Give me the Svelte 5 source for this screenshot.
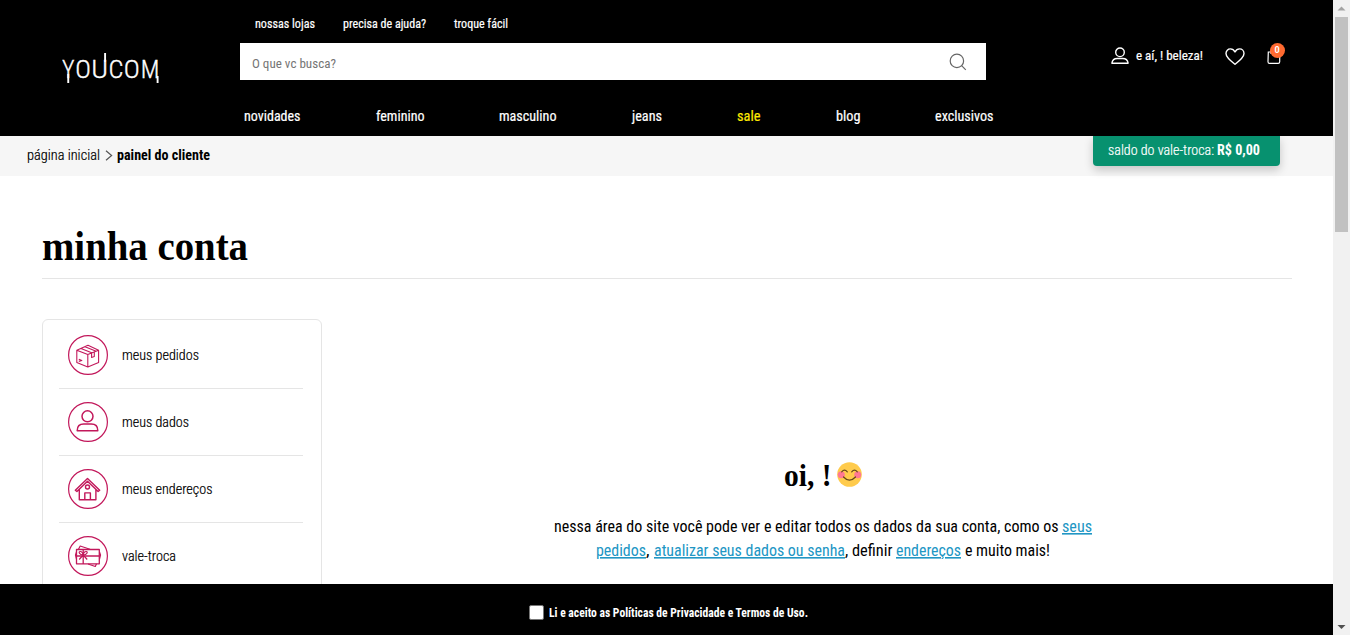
<script>
  const topLinks = [['nossas lojas', 60], ['precisa de ajuda?', 83], ['troque fácil', 54]];
  const nav = [['novidades', 56.5], ['feminino', 48.5], ['masculino', 57.5], ['jeans', 30], ['sale', 23.5], ['blog', 24.5], ['exclusivos', 58.5]];
  const menu = [['meus pedidos', 77, 'box'], ['meus dados', 67, 'user'], ['meus endereços', 90.5, 'house'], ['vale-troca', 54, 'gift']];
  const logo = [['Y', 0, 12.5], ['O', 13.2, 15.6], ['U', 29.2, 16.8], ['C', 46.5, 15], ['O', 61.8, 16], ['M', 78.8, 18.6]];
</script>

{#snippet label(text, w, size, cls = '')}
  <svg class="label {cls}" width={w} height="20"><text x="0" y="15" textLength={w} lengthAdjust="spacingAndGlyphs" font-size={size}>{text}</text></svg>
{/snippet}

<div class="window">
  <div class="page">
    <header>
      <div class="logo">
        <svg width="100" height="36" viewBox="0 0 100 36">
          {#each logo as [c, x, w]}
            <text {x} y="28" textLength={w} lengthAdjust="spacingAndGlyphs">{c}</text>
          {/each}
          <path d="M6.250 24v9M43.100 3v9M95.600 26v7" stroke="#fff" stroke-width="1.900" />
        </svg>
      </div>
      <div class="center">
        <div class="toplinks">
          {#each topLinks as [t, w]}{@render label(t, w, 13, 'medium')}{/each}
        </div>
        <div class="search">
          {@render label('O que vc busca?', 84, 13, 'hint')}
          <svg width="18" height="18" viewBox="0 0 18 18" fill="none" stroke="#666" stroke-width="1.2"><circle cx="7.9" cy="7.9" r="6.7" /><path d="M12.6 12.6l4.2 4.2" /></svg>
        </div>
        <nav>
          {#each nav as [t, w]}{@render label(t, w, 15, t === 'sale' ? 'medium sale' : 'medium')}{/each}
        </nav>
      </div>
      <div class="account">
        <svg width="18" height="18" viewBox="0 0 18 18" fill="none" stroke="#fff" stroke-width="1.4"><circle cx="9" cy="5.3" r="4.3" /><path d="M.9 16.2C1.4 12.8 3.4 11.5 6.2 11.5h5.6c2.8 0 4.8 1.3 5.3 4.7z" stroke-linejoin="round" /></svg>
        {@render label('e aí, ! beleza!', 67, 13, 'medium')}
        <svg class="heart" width="20" height="18" viewBox="0 0 20 18" fill="none" stroke="#fff" stroke-width="1.4"><path d="M10 16.3C5 12.3 1 9.2 1 5.4 1 2.8 3 .9 5.4.9 7.4.9 9 2 10 3.9 11 2 12.6.9 14.6.9 17 .9 19 2.8 19 5.4c0 3.800-4 6.900-9 10.900z" stroke-linejoin="round" /></svg>
        <div class="bag">
          <svg width="14" height="18" viewBox="0 0 14 18" fill="none" stroke="#fff" stroke-width="1.2"><path d="M1.300 5h11.400v9.800q0 1.600-1.600 1.600H2.600Q1 16.400 1 14.800zM4 7V4a3 3 0 0 1 6 0v3" /></svg>
          <b>0</b>
        </div>
      </div>
    </header>

    <div class="crumbs">
      {@render label('página inicial', 73, 14.5, 'light')}
      <svg class="chev" width="8" height="11" viewBox="0 0 8 11" fill="none" stroke="#555" stroke-width="1.2"><path d="M1 .8l5.600 4.700L1 10.200" /></svg>
      {@render label('painel do cliente', 93, 14.5, 'bold')}
      <div class="balance">
        {@render label('saldo do vale-troca:', 106, 14.5, 'light')}
        {@render label('R$ 0,00', 43, 14.5, 'bold')}
      </div>
    </div>

    <main>
      <h1><svg width="206" height="50"><text x="0" y="36" textLength="206" lengthAdjust="spacingAndGlyphs" font-size="42">minha conta</text></svg></h1>
      <div class="columns">
        <aside>
          {#each menu as [t, w, icon]}
            <div class="item">
              <svg width="40" height="40" viewBox="0 0 40 40" fill="none" stroke="#c2185b" stroke-width="1.200" stroke-linejoin="round">
                <circle cx="20" cy="20" r="19.400" />
                {#if icon === 'box'}
                  <path stroke-width="1.100" d="M8.800 15.300L20 10.300l10.600 4.900v12.200L19.800 32 8.800 27.400zM8.800 15.300l11 4.300 10.800-4.400M19.800 19.600V32M13 13.400l11.300 4.500M17 11.700l11.200 4.500M23.600 18.400v4l2.700-1v-4M10.800 24.300l3 1.200-3 .9" />
                {:else if icon === 'user'}
                  <g stroke-width="1.500"><circle cx="19.500" cy="14.300" r="5.500" /><path d="M9.200 28.700c0-4.800 3-6.700 6.500-6.700h7.600c3.500 0 6.500 1.900 6.500 6.700z" /></g>
                {:else if icon === 'house'}
                  <g stroke-width="1.400"><path d="M7.300 21.300L19.500 9.500l12.200 11.800-1.600 1.200-10.600-10.300L8.900 22.500zM11.300 20.500v10.300h16.600V20.500M16.800 30.500v-6.600h5.600v6.600" /><circle cx="19.500" cy="18" r="2" /></g>
                {:else}
                  <path stroke-width="1.300" d="M8.500 13.500h22.800v14.300H8.500zM15.200 14v13.800M8.500 20h22.800" />
                  <path d="M10.500 13.300l1.700-3.300 9.800 3.300M20 28l7.300 2.500 1.200-2.700M31.500 16l1 3-1 4M8.500 16l-1 3 1 4" />
                  <path d="M15.200 19c-4-.3-5-3.300-3-3.500 1.600-.1 3 1.700 3 3.500zm0 0c4-.3 5-3.300 3-3.500-1.600-.1-3 1.700-3 3.500zm0 0l-4 4.500m4-4.500l4 4.500" />
                {/if}
              </svg>
              {@render label(t, w, 14.5, 'light')}
            </div>
          {/each}
        </aside>
        <section>
          <h2>
            <svg width="47.500" height="36"><text x="0" y="27" textLength="47.500" lengthAdjust="spacingAndGlyphs" font-size="32">oi, !</text></svg>
            <svg width="25" height="25" viewBox="0 0 25 25" fill="none"><circle cx="12.500" cy="12.500" r="12.300" fill="#ffcb4c" /><circle cx="4.300" cy="12.700" r="3.500" fill="#ff7892" /><circle cx="20.700" cy="12.700" r="3.500" fill="#ff7892" /><path d="M4.700 9.800Q7.500 6.500 10.300 9.800M14.700 9.800Q17.500 6.500 20.300 9.800M6.500 15Q12.500 21.300 18.500 15" stroke="#65471b" stroke-width="1.200" stroke-linecap="round" /></svg>
          </h2>
          <p>{@render label('nessa área do site você pode ver e editar todos os dados da sua conta, como os', 504.5, 16)}<i></i>{@render label('seus', 30, 16, 'link')}</p>
          <p>{@render label('pedidos', 50, 16, 'link')}{@render label(',', 3.5, 16)}<i></i>{@render label('atualizar seus dados ou senha', 191, 16, 'link')}{@render label(', definir', 47.5, 16)}<i></i>{@render label('endereços', 65, 16, 'link')}<i></i>{@render label('e muito mais!', 85, 16)}</p>
        </section>
      </div>
    </main>

    <footer>
      <span class="check"></span>
      {@render label('Li e aceito as Políticas de Privacidade e Termos de Uso.', 259, 13.5, 'bold')}
    </footer>
  </div>
  <div class="scroll">
    <svg width="17" height="17"><path d="M4.500 10.500h8l-4-4z" fill="#a3a3a3" /></svg>
    <div class="thumb"></div>
    <svg width="17" height="17"><path d="M4.500 7h8l-4 4z" fill="#505050" /></svg>
  </div>
</div>

<style>
  :global(body) { overflow: hidden; }
  svg { display: block; flex: none; }
  .label { overflow: visible; font-family: Roboto, sans-serif; font-stretch: 75%; font-weight: 400; fill: currentColor; }
  .light { font-weight: 300; stroke: currentColor; stroke-width: .2px; }
  .medium { font-weight: 400; stroke: currentColor; stroke-width: .2px; }
  .bold { font-weight: 700; }
  .hint { color: #757575; }
  .sale { color: #ffea00; }
  .link { color: #2196c4; text-decoration: underline; }
  .window { display: flex; width: 1350px; height: 635px; overflow: hidden; background: #fff; font-family: Roboto, sans-serif; }
  .page { width: 1333px; display: flex; flex-direction: column; }
  header { flex: none; height: 136px; display: flex; background: #000; color: #fff; }
  .logo { width: 178px; padding: 50px 0 0 62px; }
  .logo text { fill: #fff; stroke: #fff; stroke-width: .35px; font: 300 26.500px Roboto, sans-serif; font-stretch: 75%; }
  .center { width: 746px; padding-top: 13px; }
  .toplinks { display: flex; gap: 28px; padding-left: 14.500px; }
  .search { margin-top: 10px; height: 37px; box-sizing: border-box; padding: 0 19px 0 12px; display: flex; align-items: center; justify-content: space-between; background: #fff; }
  .search .label { margin-top: 3px; }
  nav { margin: 26px 0 0 4.200px; width: 749.500px; display: flex; justify-content: space-between; }
  .account { height: 20px; margin: 45px 0 0 124.500px; display: flex; align-items: center; }
  .account .label { margin-left: 7px; }
  .account > svg:first-child { margin-top: 2px; }
  .heart { margin: 3px 22px 0 22px; }
  .bag { position: relative; margin-top: 2px; }
  .bag b { position: absolute; left: 3px; top: -4px; width: 15px; height: 15px; border-radius: 50%; background: #ff6a30; font-size: 9px; line-height: 15px; text-align: center; }
  .crumbs { flex: none; height: 40px; box-sizing: border-box; padding: 9px 53px 0 27px; display: flex; align-items: flex-start; background: #f6f6f6; color: #000; }
  .chev { margin: 5px 4.500px 0; }
  .balance { margin: -9px 0 0 auto; width: 187px; height: 30px; box-sizing: border-box; padding: 4px 0 0 15px; display: flex; gap: 3px; background: #07916f; color: #fff; border-radius: 0 0 4px 4px; box-shadow: 0 4px 10px #0003; clip-path: inset(0 -20px -20px); }
  main { flex: 1; min-height: 0; overflow: hidden; padding: 48px 41px 0 42px; }
  h1 { margin: 0; height: 54px; border-bottom: 1px solid #e5e5e5; font: 700 42px "Liberation Serif", serif; }
  h1 svg, h2 svg { overflow: visible; }
  .columns { display: flex; margin-top: 40px; }
  aside { width: 280px; height: 400px; box-sizing: border-box; flex: none; border: 1px solid #e5e5e5; border-radius: 6px; padding: 2px 18px 0 16px; }
  .item { height: 66px; padding-left: 9px; display: flex; align-items: center; gap: 14px; border-bottom: 1px solid #e5e5e5; }
  section { flex: 1; padding: 140px 0 0 32px; }
  h2 { margin: 0 0 22px; height: 36px; display: flex; justify-content: center; gap: 6px; font: 700 32px "Liberation Serif", serif; }
  h2 svg:last-child { margin-top: 3px; }
  p { margin: 0; height: 24px; display: flex; justify-content: center; }
  i { width: 4px; }
  footer { flex: none; height: 51px; display: flex; justify-content: center; align-items: center; gap: 5px; padding-left: 4px; box-sizing: border-box; background: #000; color: #fff; }
  .check { width: 13px; height: 13px; margin-top: 5px; border: 1px solid #767676; border-radius: 2px; background: #fff; }
  footer .label { margin-top: 5px; }
  .scroll { width: 17px; background: #f1f1f1; display: flex; flex-direction: column; }
  .scroll svg:last-child { margin-top: auto; }
  .thumb { width: 13px; height: 215px; margin-left: 2px; background: #c1c1c1; }
</style>
